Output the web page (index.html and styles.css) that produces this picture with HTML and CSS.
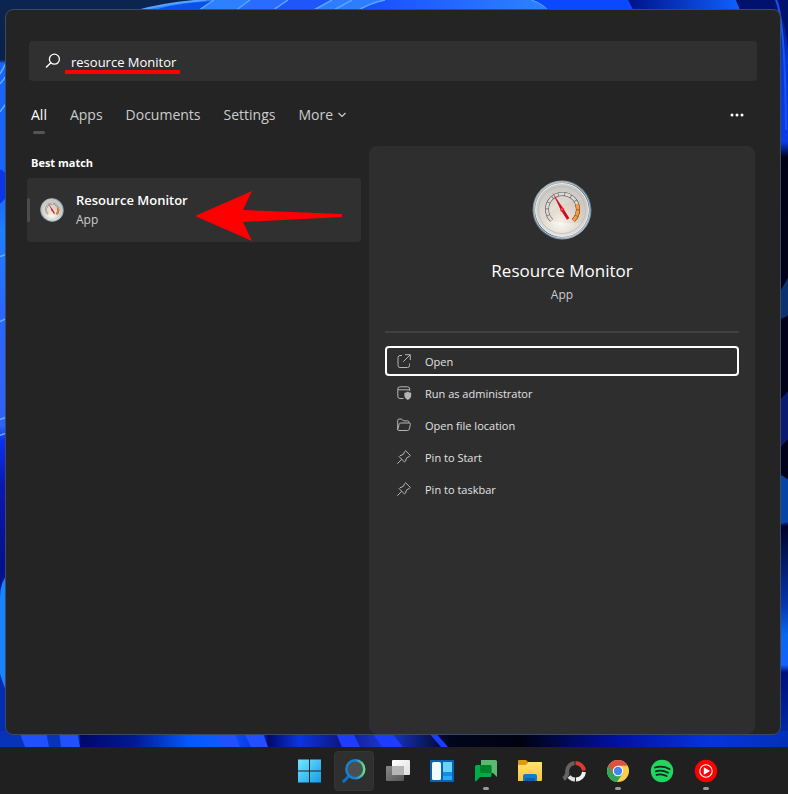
FILE: index.html
```
<!DOCTYPE html>
<html lang="en">
<head>
  <meta charset="UTF-8">
  <meta name="viewport" content="width=device-width, initial-scale=1.0">
  <title>Search</title>
  <link rel="stylesheet" href="styles.css">
</head>
<body>

<svg class="wallpaper" viewBox="0 0 788 748" preserveAspectRatio="none" aria-hidden="true">
  <defs>
    <linearGradient id="leftEdge" x1="0" y1="0" x2="0" y2="1">
      <stop offset="0" stop-color="#0c2450"/>
      <stop offset=".08" stop-color="#0a2048"/>
      <stop offset=".085" stop-color="#1766ff"/>
      <stop offset=".25" stop-color="#1763ff"/>
      <stop offset=".31" stop-color="#1b80ff"/>
      <stop offset=".42" stop-color="#2b66ff"/>
      <stop offset=".57" stop-color="#2f62f5"/>
      <stop offset=".59" stop-color="#0b30f0"/>
      <stop offset=".65" stop-color="#0a18b0"/>
      <stop offset=".76" stop-color="#03108c"/>
      <stop offset=".9" stop-color="#042cb0"/>
      <stop offset="1" stop-color="#042cb4"/>
    </linearGradient>
    <linearGradient id="rightEdge" x1="0" y1="0" x2="0" y2="1">
      <stop offset="0" stop-color="#001068"/>
      <stop offset=".08" stop-color="#0536d8"/>
      <stop offset=".19" stop-color="#0a3bea"/>
      <stop offset=".21" stop-color="#010116"/>
      <stop offset=".64" stop-color="#02021c"/>
      <stop offset=".7" stop-color="#062880"/>
      <stop offset=".705" stop-color="#010228"/>
      <stop offset=".81" stop-color="#0636b0"/>
      <stop offset=".85" stop-color="#0768f0"/>
      <stop offset=".89" stop-color="#1462ff"/>
      <stop offset=".9" stop-color="#00107c"/>
      <stop offset="1" stop-color="#0330b0"/>
    </linearGradient>
    <linearGradient id="petal">
      <stop offset="0" stop-color="#174cff"/>
      <stop offset="1" stop-color="#2f83ff"/>
    </linearGradient>
    <linearGradient id="petalDark">
      <stop offset="0" stop-color="#00128a"/>
      <stop offset="1" stop-color="#0f62ff"/>
    </linearGradient>
    <linearGradient id="bottomEdge" gradientUnits="userSpaceOnUse" x1="0" y1="0" x2="788" y2="0">
      <stop offset="0" stop-color="#0733b8"/>
      <stop offset=".1" stop-color="#0733b8"/>
      <stop offset=".102" stop-color="#000868"/>
      <stop offset=".17" stop-color="#001a90"/>
      <stop offset=".24" stop-color="#0757ff"/>
      <stop offset=".28" stop-color="#0a5cff"/>
      <stop offset=".335" stop-color="#0a2ad8"/>
      <stop offset=".34" stop-color="#000a68"/>
      <stop offset=".38" stop-color="#0a35e0"/>
      <stop offset=".43" stop-color="#0c1888"/>
      <stop offset=".49" stop-color="#1c38d0"/>
      <stop offset=".57" stop-color="#00061e"/>
      <stop offset=".66" stop-color="#00020f"/>
      <stop offset=".78" stop-color="#0210a0"/>
      <stop offset=".9" stop-color="#0534dd"/>
      <stop offset="1" stop-color="#0330b8"/>
    </linearGradient>
  </defs>
  <rect width="788" height="748" fill="#0c2450"/>
  <rect width="20" height="748" fill="url(#leftEdge)"/>
  <path d="M0 74L8 60M0 84L8 74M0 112L8 101M0 257L8 254M0 322L8 318M0 420L8 417M0 436L8 433" stroke="#62adff" stroke-width="1.5" fill="none"/>
  <path d="M0 170Q5 170 8 180V194Q5 200 0 204Z" fill="#0a35e8"/>
  <path d="M8 575Q0 582 0 598V675L8 698Z" fill="#1784ff"/>
  <rect x="768" width="20" height="748" fill="url(#rightEdge)"/>
  <path d="M780 292L788 278V316L780 320Z" fill="#0b3170"/>
  <path d="M780 400L788 392V440L780 448Z" fill="#0a1a70"/>
  <path d="M780 475L788 480V523L780 525Z" fill="#0644a8"/>
  <path d="M137 12Q165 2 206 0H640V12Z" fill="#2f7dff"/>
  <path d="M137 11Q165 3 206 0" fill="none" stroke="#51a4ff" stroke-width="2"/>
  <path d="M152 11Q170 4 212 1L198 11Z" fill="#0b50e8"/>
  <path d="M198 11L214 0H250L235 11Z" fill="#2f80ff"/>
  <path d="M235 11L250 0H288L272 11Z" fill="#2a6cff"/>
  <path d="M272 11L288 0H332L312 11Z" fill="#1f56fa"/>
  <path d="M357 11Q370 3 385 0H532Q544 4 550 11Z" fill="url(#petal)"/>
  <path d="M198 11L214 0M235 11L250 0M272 11L288 0M312 11L332 0M332 11L352 0M357 11Q370 3 385 0M532 0Q544 4 550 11" fill="none" stroke="#58a5ff" stroke-width="1.5"/>
  <path d="M533 0H628L634 12H550Q544 4 533 0Z" fill="#0a49ff"/>
  <path d="M628 0H736L741 12H634Z" fill="url(#petalDark)"/>
  <path d="M736 0H788V50Q784 8 772 0L776 12H741Z" fill="#00126e"/>
  <path d="M776 0Q785 18 786 130" fill="none" stroke="#1a55f0" stroke-width="2"/>
  <rect y="732" width="788" height="16" fill="url(#bottomEdge)"/>
  <path d="M19 732H46L49 748H25ZM59 732H77L80 748H61Z" fill="#2150ff"/>
  <path d="M214 732H234L240 748H222ZM243 732H262L268 748H251Z" fill="#2050ff"/>
  <path d="M335 732L342 748H360L352 732ZM371 732L382 748H403L390 732ZM427 732L441 748H448L434 732Z" fill="#1c3cff"/>
</svg>

<main class="desktop">
  <section class="panel">
    <form class="search" role="search">
      <label class="search-icon" for="searchInput" aria-label="Search">
        <svg viewBox="0 0 16 16" width="16" height="16">
          <circle cx="9.4" cy="6.2" r="5" fill="none" stroke="#fff" stroke-width="1.3"/>
          <path d="M5.8 9.8L1 14.6" stroke="#fff" stroke-width="1.4"/>
        </svg>
      </label>
      <input type="text" id="searchInput" value="resource Monitor" autocomplete="off" spellcheck="false">
      <span class="underline"></span>
    </form>

    <nav class="tabs">
      <button class="tab active" type="button">All</button>
      <button class="tab" type="button">Apps</button>
      <button class="tab" type="button">Documents</button>
      <button class="tab" type="button">Settings</button>
      <button class="tab" type="button">More
        <svg viewBox="0 0 8 6" width="8" height="6"><path d="M.5 1L4 4.5L7.5 1" fill="none" stroke="#ccc" stroke-width="1.2"/></svg>
      </button>
      <button class="options" type="button" aria-label="Options">
        <svg viewBox="0 0 14 4" width="14" height="4" fill="#fff">
          <circle cx="2" cy="2" r="1.5"/><circle cx="7" cy="2" r="1.5"/><circle cx="12" cy="2" r="1.5"/>
        </svg>
      </button>
    </nav>

    <div class="content">
      <div class="results">
        <h2>Best match</h2>
        <button class="result" type="button">
          <svg class="result-icon" viewBox="0 0 60 60" width="24" height="24"><use href="#gauge"/></svg>
          <span class="result-text">
            <strong>Resource Monitor</strong>
            <span>App</span>
          </span>
          <svg class="arrow" viewBox="0 0 148 52" width="148" height="52">
            <path d="M0 26L57 1L48 20L147 24V27L48 32L57 51Z" fill="#f00"/>
          </svg>
        </button>
      </div>

      <div class="preview">
        <svg class="preview-icon" viewBox="0 0 60 60" width="60" height="60">
          <defs>
            <radialGradient id="face" cx=".48" cy=".7" r=".62">
              <stop offset="0" stop-color="#fffdf8"/>
              <stop offset=".5" stop-color="#e2ddd5"/>
              <stop offset="1" stop-color="#c9c8c4"/>
            </radialGradient>
            <linearGradient id="rim" x1="0" y1="0" x2=".7" y2="1">
              <stop offset="0" stop-color="#e0e3e4"/>
              <stop offset=".4" stop-color="#6e7b82"/>
              <stop offset=".75" stop-color="#496b88"/>
              <stop offset="1" stop-color="#b9c3ca"/>
            </linearGradient>
            <g id="gauge">
              <circle cx="30" cy="30" r="29.5" fill="url(#rim)"/>
              <circle cx="30" cy="30" r="28" fill="none" stroke="#bcc8cd" stroke-width="1"/>
              <circle cx="30" cy="30" r="26.4" fill="url(#face)" stroke="#eef0ef" stroke-width="1"/>
              <circle cx="30" cy="30" r="23.5" fill="none" stroke="#b9b8b4" stroke-width=".7"/>
              <path d="M10 38C22 32 27 21 51 20Q55 30 50 42Q36 46 10 38Z" fill="#c99f7c" opacity=".16"/>
              <path d="M19.6 40.4A15.5 15.5 0 1 1 41.4 40.4" fill="none" stroke="#666" stroke-width="4"/>
              <path d="M19.6 40.4A15.5 15.5 0 1 1 41.4 40.4" fill="none" stroke="#dedbd4" stroke-width="2.6" stroke-dasharray="5.8 .7"/>
              <path d="M45 24.3A15.5 15.5 0 0 1 41.4 40.4" fill="none" stroke="#75522b" stroke-width="4"/>
              <path d="M45 24.3A15.5 15.5 0 0 1 41.4 40.4" fill="none" stroke="#ff9a3d" stroke-width="3" stroke-dasharray="5.4 .6"/>
              <path d="M20.4 12.6L31.5 28.7L37.4 38.2L35 39.8L29 30.5Z" fill="#d00d1e"/>
              <circle cx="30.2" cy="29.7" r="2" fill="#dc2032"/>
              <circle cx="29.8" cy="29.2" r=".7" fill="#ff8790"/>
            </g>
          </defs>
          <use href="#gauge"/>
        </svg>
        <h1>Resource Monitor</h1>
        <p>App</p>
        <hr>
        <ul class="actions">
          <li><button class="action focused" type="button">
            <svg viewBox="0 0 16 16" width="16" height="16"><path d="M6 2.5H4A2 2 0 0 0 2 4.5V12.5A2 2 0 0 0 4 14.5H11.5A2 2 0 0 0 13.5 12.5V10.5M9 1.7H14.3V7M14 2L7.2 8.8"/></svg>
            Open
          </button></li>
          <li><button class="action" type="button">
            <svg viewBox="0 0 16 16" width="16" height="16"><path d="M7.5 13.5H4A2.2 2.2 0 0 1 1.8 11.3V4A2.2 2.2 0 0 1 4 1.8H11.5A2.2 2.2 0 0 1 13.7 4V6M2 4.8H13.5"/><path class="solid" d="M11.8 6.4Q13.3 7.8 15.2 7.8V10.6Q15.2 13.4 11.8 15Q8.4 13.4 8.4 10.6V7.8Q10.3 7.8 11.8 6.4Z"/></svg>
            Run as administrator
          </button></li>
          <li><button class="action" type="button">
            <svg viewBox="0 0 16 16" width="16" height="16"><path d="M1.7 13V3.5A1.5 1.5 0 0 1 3.2 2H5.6L7.4 3.9H11.5A1.5 1.5 0 0 1 13 5.4V6M1.7 12.5L3.2 7.2A1.6 1.6 0 0 1 4.7 6H13.3A1.1 1.1 0 0 1 14.4 7.4L13.2 12.2A1.7 1.7 0 0 1 11.6 13.5H2.7A1 1 0 0 1 1.7 12.5"/></svg>
            Open file location
          </button></li>
          <li><button class="action" type="button">
            <svg viewBox="0 0 16 16" width="16" height="16"><path d="M9.7 1.8L14.3 6.4L13.5 7.4L10.5 9L9.4 12.3L8.5 13L3.1 7.6L4 6.7L7.2 5.5L8.8 2.5ZM5.8 10.3L1.3 14.7"/></svg>
            Pin to Start
          </button></li>
          <li><button class="action" type="button">
            <svg viewBox="0 0 16 16" width="16" height="16"><path d="M9.7 1.8L14.3 6.4L13.5 7.4L10.5 9L9.4 12.3L8.5 13L3.1 7.6L4 6.7L7.2 5.5L8.8 2.5ZM5.8 10.3L1.3 14.7"/></svg>
            Pin to taskbar
          </button></li>
        </ul>
      </div>
    </div>
  </section>
</main>

<footer class="taskbar">
  <button class="task" type="button" aria-label="Start">
    <svg viewBox="0 0 24 24" width="24" height="24">
      <defs><linearGradient id="win" x1="0" y1="0" x2="1" y2="1"><stop offset="0" stop-color="#72e8ff"/><stop offset="1" stop-color="#159be8"/></linearGradient></defs>
      <path d="M0 .5H11V11.5H0ZM12 .5H23V11.5H12ZM0 12.5H11V23.5H0ZM12 12.5H23V23.5H12Z" fill="url(#win)"/>
    </svg>
  </button>
  <button class="task open" type="button" aria-label="Search">
    <svg viewBox="0 0 24 24" width="24" height="24">
      <defs><linearGradient id="lens"><stop offset=".5" stop-color="#1683d2"/><stop offset="1" stop-color="#66e28a"/></linearGradient></defs>
      <path d="M7 17L1.8 22.3" stroke="#0f70c2" stroke-width="3" stroke-linecap="round"/>
      <circle cx="13.3" cy="10.3" r="9" fill="#4a4f52" stroke="url(#lens)" stroke-width="2.4"/>
    </svg>
  </button>
  <button class="task" type="button" aria-label="Task view">
    <svg viewBox="0 0 24 24" width="24" height="24">
      <defs>
        <linearGradient id="viewBack" x1="0" y1="0" x2="1" y2="1"><stop offset="0" stop-color="#fff"/><stop offset="1" stop-color="#ddd"/></linearGradient>
        <linearGradient id="viewFront" x1="0" y1="0" x2="1" y2="1"><stop offset="0" stop-color="#888"/><stop offset="1" stop-color="#555"/></linearGradient>
      </defs>
      <rect x="6" y="1" width="18" height="15" rx="1" fill="url(#viewBack)"/>
      <rect y="7" width="18" height="15" rx="1" fill="url(#viewFront)"/>
      <path d="M6 7H18V16H6Z" fill="#b5b5b5"/>
    </svg>
  </button>
  <button class="task" type="button" aria-label="Widgets">
    <svg viewBox="0 0 24 24" width="24" height="24">
      <rect y="1" width="24" height="22" rx="1" fill="#0863b5"/>
      <rect x="2" y="3" width="9" height="18" rx="1.5" fill="#f5f8fb"/>
      <path d="M13 3H22V13H13Z" fill="#69d3fb"/><path d="M13 13H22V17H13Z" fill="#148de0"/><path d="M13 17H22V21H13Z" fill="#30a9f0"/>
    </svg>
  </button>
  <button class="task running" type="button" aria-label="Chat">
    <svg viewBox="0 0 24 24" width="24" height="24">
      <path d="M7 1H21.5A1.5 1.5 0 0 1 23 2.5V18L19 14H7Z" fill="#5cb974"/>
      <path d="M2.5 6H16A1.5 1.5 0 0 1 17.5 7.5V16.5A1.5 1.5 0 0 1 16 18H6L2 22.5L1 22V7.5A1.5 1.5 0 0 1 2.5 6Z" fill="#00ac47"/>
      <path d="M6 6H16A1.5 1.5 0 0 1 17.5 7.5V14H7.5A1.5 1.5 0 0 1 6 12.5Z" fill="#00832d"/>
    </svg>
  </button>
  <button class="task" type="button" aria-label="File Explorer">
    <svg viewBox="0 0 24 24" width="24" height="24">
      <defs><linearGradient id="folder" x1="0" y1="0" x2="0" y2="1"><stop offset="0" stop-color="#ffe176"/><stop offset="1" stop-color="#fac536"/></linearGradient></defs>
      <path d="M0 2Q0 1 1 1H8L10 3H23Q24 3 24 4V9H0Z" fill="#dc9a0c"/>
      <path d="M0 6H8L10.5 3H23Q24 3 24 4V21Q24 22 23 22H0Z" fill="url(#folder)"/>
      <path d="M5 17Q5 15 7 15H17Q19 15 19 17V22H5Z" fill="#147cc7"/><path d="M7 19H17V22H7Z" fill="#0764a9"/>
    </svg>
  </button>
  <button class="task" type="button" aria-label="Monitor">
    <svg viewBox="0 0 24 24" width="24" height="24" fill="none" stroke-width="4">
      <path d="M13.5 4A8.5 8.5 0 0 1 22 11.5" stroke="#dd3a32"/>
      <path d="M22 13A8.5 8.5 0 0 1 14 20.5" stroke="#f0f0f0"/>
      <path d="M13 20.5A8.5 8.5 0 0 1 7 17.5" stroke="#e0e0e0"/>
      <path d="M12.5 4A8.5 8.5 0 0 0 5.3 14Q4.5 18 1.5 20" stroke="#626262"/>
    </svg>
  </button>
  <button class="task running" type="button" aria-label="Chrome">
    <svg viewBox="0 0 24 24" width="24" height="24">
      <circle cx="12" cy="12" r="11" fill="#fbcf4b"/>
      <path d="M12 12L2.5 6.5A11 11 0 0 0 11 23L17 14Z" fill="#34a45a"/>
      <path d="M2.5 6.5A11 11 0 0 1 21.6 6.7H12L7.3 14.7Z" fill="#dc5146"/>
      <circle cx="12" cy="12" r="5.2" fill="#fff"/><circle cx="12" cy="12" r="4.2" fill="#4285f4"/>
    </svg>
  </button>
  <button class="task" type="button" aria-label="Spotify">
    <svg viewBox="0 0 24 24" width="24" height="24">
      <circle cx="12" cy="12" r="11.2" fill="#1ed760"/>
      <path d="M5 8.5Q12.5 6.3 19.5 10M5.8 12.3Q12 10.6 18 13.7M6.5 15.8Q12 14.5 16.6 17" fill="none" stroke="#17231b" stroke-width="1.8" stroke-linecap="round"/>
    </svg>
  </button>
  <button class="task running" type="button" aria-label="YouTube Music">
    <svg viewBox="0 0 24 24" width="24" height="24">
      <circle cx="12" cy="12" r="11.2" fill="#f00"/>
      <circle cx="12" cy="12" r="6.2" fill="none" stroke="#fff" stroke-width="1.1"/>
      <path d="M9.8 8.3L16 12L9.8 15.7Z" fill="#fff"/>
    </svg>
  </button>
</footer>

</body>
</html>
```

FILE: styles.css
```
* {
  box-sizing: border-box;
  margin: 0;
  padding: 0;
}

body {
  display: flex;
  flex-direction: column;
  min-height: 100vh;
  background: #202020;
  color: #fff;
  font-family: "Open Sans", "Noto Sans", sans-serif;
  font-size: 12px;
}

button,
input {
  background: none;
  border: none;
  color: inherit;
  font: inherit;
}

.wallpaper {
  position: absolute;
  top: 0;
  left: 0;
  width: 100%;
  height: calc(100% - 47px);
  z-index: -1;
}

.desktop {
  flex: 1;
  display: flex;
  padding: 9px 7px 12px 5px;
}

.panel {
  flex: 1;
  display: flex;
  flex-direction: column;
  padding-top: 31px;
  background: #242424;
  border: 1px solid #3b4866;
  border-radius: 8px;
}

.search {
  position: relative;
  display: flex;
  align-items: center;
  gap: 10px;
  height: 40px;
  margin: 0 23px;
  padding: 0 16px;
  background: #303030;
  border-radius: 4px;
}

.search-icon {
  display: flex;
}

.search input {
  flex: 1;
  height: 100%;
  padding-top: 2px;
  outline: none;
  font-size: 13px;
}

.underline {
  position: absolute;
  left: 36px;
  bottom: 7px;
  width: 115px;
  height: 4px;
  background: #f00;
}

.tabs {
  display: flex;
  align-items: center;
  gap: 23px;
  height: 65px;
  padding: 2px 36px 0 25px;
  font-size: 14px;
  color: #ccc;
}

.tab {
  position: relative;
  display: flex;
  align-items: center;
  gap: 5px;
  height: 40px;
}

.tab.active {
  color: #fff;
}

.tab.active::after {
  content: "";
  position: absolute;
  left: 2px;
  bottom: 1px;
  width: 12px;
  height: 3px;
  border-radius: 2px;
  background: #555;
}

.options {
  display: flex;
  margin-left: auto;
}

.content {
  flex: 1;
  display: grid;
  grid-template-columns: 334fr 386fr;
  gap: 8px;
  padding: 0 25px 0 21px;
}

.results h2 {
  padding: 8px 4px 7px;
  font-size: 11px;
  line-height: 17px;
}

.result {
  position: relative;
  display: flex;
  align-items: center;
  gap: 12px;
  width: 100%;
  height: 64px;
  padding-left: 13px;
  background: #303030;
  border-radius: 4px;
  text-align: left;
}

.result::before {
  content: "";
  position: absolute;
  left: 0;
  top: 20px;
  width: 3px;
  height: 24px;
  border-radius: 2px;
  background: #4c4c4c;
}

.result-text {
  display: flex;
  flex-direction: column;
  line-height: 20px;
  color: #ccc;
}

.result-text strong {
  font-size: 13px;
  font-weight: 600;
  color: #fff;
}

.arrow {
  position: absolute;
  left: 168px;
  top: 12px;
}

.preview {
  padding: 34px 16px 16px;
  background: #2e2e2e;
  border-radius: 8px;
  text-align: center;
}

.preview-icon {
  display: block;
  margin: 0 auto 18px;
}

.preview h1 {
  font-size: 17px;
  font-weight: 400;
  line-height: 26px;
}

.preview p {
  margin-top: 1px;
  line-height: 20px;
  color: #ccc;
}

.preview hr {
  margin: 26px 0 13px;
  border: none;
  border-top: 2px solid #414141;
}

.actions {
  display: flex;
  flex-direction: column;
  gap: 2px;
  list-style: none;
  font-size: 11px;
}

.action {
  display: flex;
  align-items: center;
  gap: 13px;
  width: 100%;
  height: 30px;
  padding: 0 9px;
  border: 2px solid transparent;
  border-radius: 4px;
  color: #e2e2e2;
}

.action.focused {
  border-color: #fff;
}

.action svg {
  fill: none;
  stroke: #b5b5b5;
}

.action .solid {
  fill: #b5b5b5;
  stroke: none;
}

.taskbar {
  display: flex;
  align-items: center;
  justify-content: flex-end;
  gap: 4px;
  height: 47px;
  padding-right: 62px;
  background: #202020;
}

.task {
  position: relative;
  display: grid;
  place-items: center;
  width: 40px;
  height: 40px;
  border-radius: 4px;
}

.task.open {
  background: #2f2f2f;
  border: 1px solid #353535;
}

.task.running::after {
  content: "";
  position: absolute;
  left: 17px;
  bottom: 1px;
  width: 6px;
  height: 3px;
  border-radius: 2px;
  background: #999;
}
```
